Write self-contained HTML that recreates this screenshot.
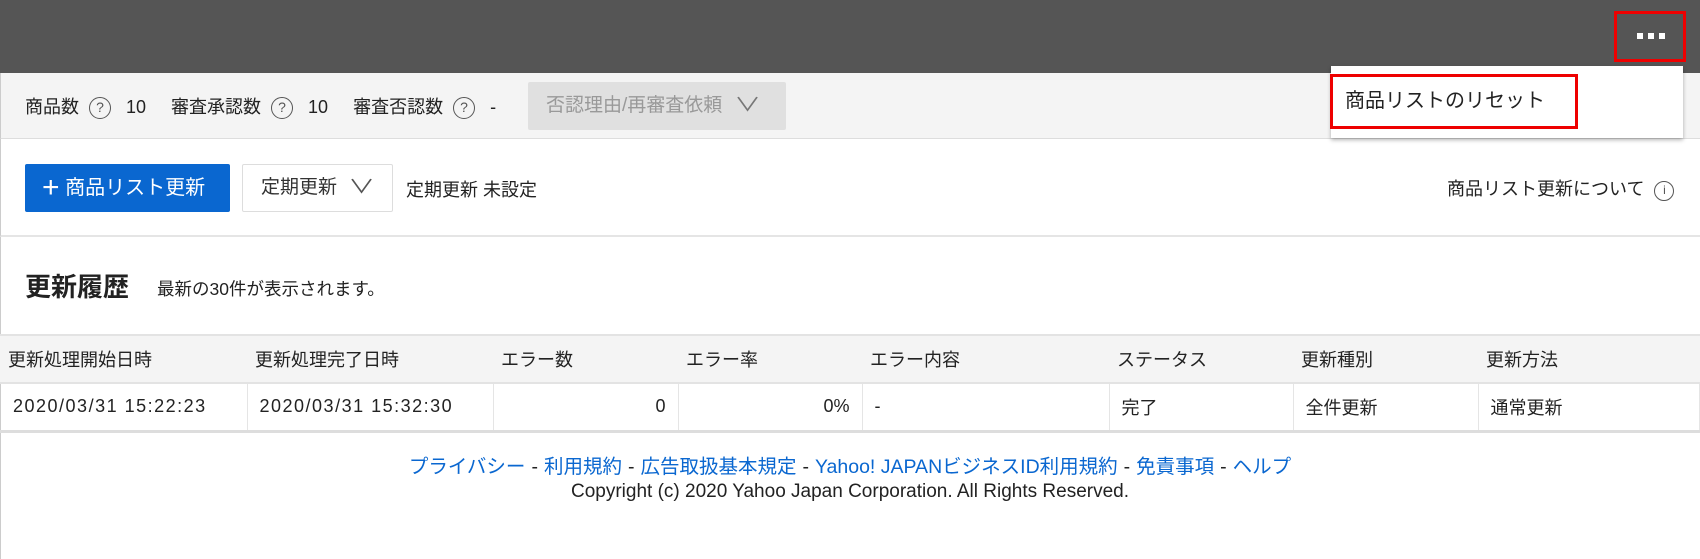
<!DOCTYPE html>
<html><head><meta charset="utf-8"><style>
*{box-sizing:border-box;margin:0;padding:0}
body{width:1700px;height:559px;overflow:hidden;background:#fff;font-family:"Liberation Sans","Noto Sans CJK JP",sans-serif;color:#222;font-size:16px;position:relative}
.hdr{position:absolute;left:0;top:0;width:1700px;height:73px;background:#555}
.abs{position:absolute;white-space:nowrap}
.tb{position:absolute;left:0;top:73px;width:1700px;height:66px;background:#f4f4f4;border-bottom:1px solid #ddd;border-left:1px solid #ccc}
.q{display:inline-block;width:22px;height:22px;border:1.5px solid #555;border-radius:50%;font-size:14px;text-align:center;line-height:19px;color:#555;vertical-align:1px}
.sec2{position:absolute;left:0;top:139px;width:1700px;height:98px;border-bottom:2px solid #e5e5e5;border-left:1px solid #ccc}
table{position:absolute;left:0;top:334px;width:1700px;border-collapse:collapse;font-size:18px}
th{background:#f4f4f4;font-weight:normal;text-align:left;height:48px;padding-left:8px;border-top:2px solid #e3e3e3;border-bottom:2px solid #e3e3e3}
td{height:48px;padding:0 12px;border-right:1px solid #e5e5e5;border-bottom:3px solid #ddd}
a{color:#0a67d0;text-decoration:none}
.sp{margin:0 6px}
</style></head><body>
<div class="hdr"></div>
<div class="abs" style="left:1614px;top:11px;width:72px;height:51px;border:3px solid #e00"></div>
<div class="abs" style="left:1637px;top:33px;width:6px;height:6px;background:#fff"></div>
<div class="abs" style="left:1648px;top:33px;width:6px;height:6px;background:#fff"></div>
<div class="abs" style="left:1659px;top:33px;width:6px;height:6px;background:#fff"></div>
<div class="tb"></div>
<div class="abs" style="left:25px;top:93px;font-size:18px">商品数&nbsp; <span class="q">?</span>&nbsp;&nbsp; 10&nbsp;&nbsp;&nbsp;&nbsp; 審査承認数&nbsp; <span class="q">?</span>&nbsp;&nbsp; 10&nbsp;&nbsp;&nbsp;&nbsp; 審査否認数&nbsp; <span class="q">?</span>&nbsp;&nbsp; -</div>
<div class="abs" style="left:528px;top:82px;width:258px;height:48px;background:#e0e0e0;border-radius:2px;color:#999;font-size:19px;line-height:48px;padding-left:18px">否認理由/再審査依頼 <span style="color:#777;display:inline-block;transform:scaleX(1.4);margin-left:10px">∨</span></div>
<div class="abs" style="left:1331px;top:66px;width:352px;height:72px;background:#fff;box-shadow:0 2px 4px rgba(0,0,0,.3)"></div>
<div class="abs" style="left:1330px;top:74px;width:248px;height:55px;border:3px solid #e00;font-size:20px;line-height:49px;padding-left:12px">商品リストのリセット</div>
<div class="sec2"></div>
<div class="abs" style="left:25px;top:164px;width:205px;height:48px;background:#0a67d0;border-radius:2px;color:#fff;font-size:20px;line-height:48px;padding-left:17px"><span style="font-size:30px;font-weight:200;vertical-align:-3px">+</span> 商品リスト更新</div>
<div class="abs" style="left:242px;top:164px;width:151px;height:48px;border:1px solid #ddd;border-radius:2px;font-size:19px;line-height:46px;padding-left:18px;color:#333">定期更新 <span style="color:#555;display:inline-block;transform:scaleX(1.4);margin-left:10px">∨</span></div>
<div class="abs" style="left:406px;top:176px;font-size:18px">定期更新 未設定</div>
<div class="abs" style="left:1447px;top:175px;font-size:18px">商品リスト更新について&nbsp; <span class="q" style="width:20px;height:20px;line-height:17px;font-size:12px">i</span></div>
<div class="abs" style="left:25px;top:267px;font-size:26px;font-weight:bold">更新履歴</div>
<div class="abs" style="left:157px;top:276px;font-size:17.5px">最新の30件が表示されます。</div>
<div class="abs" style="left:0;top:237px;width:1px;height:322px;background:#ccc"></div>
<table>
<tr><th style="width:247px">更新処理開始日時</th><th style="width:246px">更新処理完了日時</th><th style="width:185px">エラー数</th><th style="width:184px">エラー率</th><th style="width:247px">エラー内容</th><th style="width:184px">ステータス</th><th style="width:185px">更新種別</th><th>更新方法</th></tr>
<tr><td style="padding-left:13px;letter-spacing:1.5px">2020/03/31 15:22:23</td><td style="letter-spacing:1.5px">2020/03/31 15:32:30</td><td style="text-align:right">0</td><td style="text-align:right">0%</td><td>-</td><td>完了</td><td>全件更新</td><td>通常更新</td></tr>
</table>
<div class="abs" style="left:0;width:1700px;top:450px;text-align:center;font-size:19.5px"><a>プライバシー</a><span class="sp">-</span><a>利用規約</a><span class="sp">-</span><a>広告取扱基本規定</a><span class="sp">-</span><a>Yahoo! JAPANビジネスID利用規約</a><span class="sp">-</span><a>免責事項</a><span class="sp">-</span><a>ヘルプ</a></div>
<div class="abs" style="left:0;width:1700px;top:481px;text-align:center;font-size:19px">Copyright (c) 2020 Yahoo Japan Corporation. All Rights Reserved.</div>
</body></html>
